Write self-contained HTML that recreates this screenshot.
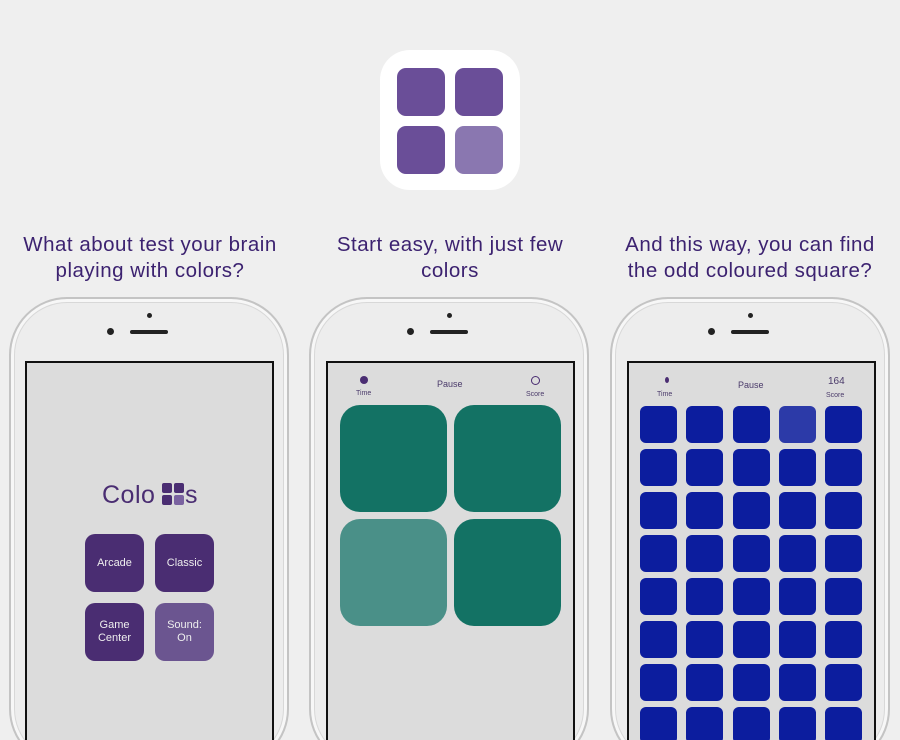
<!DOCTYPE html>
<html style="width:900px;height:740px;overflow:hidden"><head><meta charset="utf-8"><style>
*{margin:0;padding:0;box-sizing:border-box}
body{width:900px;height:740px;background:#efefef;position:relative;overflow:hidden;font-family:"Liberation Sans",sans-serif}
.abs{position:absolute}
.icon{left:380px;top:50px;width:140px;height:140px;background:#fff;border-radius:30px}
.ic{position:absolute;width:48px;height:48px;border-radius:9px;background:#6a4e98}
.cap{position:absolute;top:232px;width:300px;text-align:center;color:#3c2270;font-size:20.5px;line-height:26px;letter-spacing:.5px}
.phone{position:absolute;top:297px;width:280px;height:470px;background:#ededed;border:2px solid #c4c4c4;border-radius:58px;box-shadow:inset 0 0 0 3px #f7f7f7,inset 0 0 0 4px #d8d8d8}
.screen{position:absolute;top:361px;width:249px;height:390px;background:#dcdcdc;border:2px solid #111}
.cam{position:absolute;width:7px;height:7px;border-radius:50%;background:#222}
.spk{position:absolute;width:38px;height:4px;border-radius:2px;background:#222}
.dot{position:absolute;width:5px;height:5px;border-radius:50%;background:#222}
.btn{position:absolute;width:59px;height:58px;border-radius:10px;background:#4a2d72;color:#eee;font-size:11px;display:flex;align-items:center;justify-content:center;text-align:center;line-height:13px}
.g{position:absolute;width:107px;height:107px;border-radius:20px;background:#137264}
.lbl{position:absolute;color:#4a3a6a;font-size:7px}
.grid{position:absolute;left:640px;top:406px;display:grid;grid-template-columns:repeat(5,37px);column-gap:9.3px;row-gap:6px}
.grid div{width:37px;height:37px;border-radius:6px;background:#0c1d9e}
</style></head><body>
<div class="abs icon">
<div class="ic" style="left:17px;top:18px"></div><div class="ic" style="left:75px;top:18px"></div>
<div class="ic" style="left:17px;top:76px"></div><div class="ic" style="left:75px;top:76px;background:#8a77b0"></div>
</div>
<div class="cap" style="left:0">What about test your brain<br>playing with colors?</div>
<div class="cap" style="left:300px">Start easy, with just few<br>colors</div>
<div class="cap" style="left:600px">And this way, you can find<br>the odd coloured square?</div>

<div class="phone" style="left:9px"></div>
<div class="phone" style="left:309px"></div>
<div class="phone" style="left:610px"></div>

<div class="dot" style="left:147px;top:313px"></div><div class="cam" style="left:107px;top:328px"></div><div class="spk" style="left:130px;top:330px"></div>
<div class="dot" style="left:447px;top:313px"></div><div class="cam" style="left:407px;top:328px"></div><div class="spk" style="left:430px;top:330px"></div>
<div class="dot" style="left:748px;top:313px"></div><div class="cam" style="left:708px;top:328px"></div><div class="spk" style="left:731px;top:330px"></div>

<div class="screen" style="left:25px"></div>
<div class="screen" style="left:326px"></div>
<div class="screen" style="left:627px"></div>

<div class="abs" style="left:102px;top:481px;font-size:25px;color:#4a2d72;letter-spacing:0.5px">Colo</div>
<div class="abs" style="left:162px;top:483px;width:22px;height:22px">
<div class="abs" style="left:0;top:0;width:10px;height:10px;background:#4a2d72;border-radius:2px"></div>
<div class="abs" style="left:12px;top:0;width:10px;height:10px;background:#4a2d72;border-radius:2px"></div>
<div class="abs" style="left:0;top:12px;width:10px;height:10px;background:#4a2d72;border-radius:2px"></div>
<div class="abs" style="left:12px;top:12px;width:10px;height:10px;background:#7a62a0;border-radius:2px"></div>
</div>
<div class="abs" style="left:185px;top:481px;font-size:25px;color:#4a2d72">s</div>
<div class="btn" style="left:85px;top:534px">Arcade</div>
<div class="btn" style="left:155px;top:534px">Classic</div>
<div class="btn" style="left:85px;top:603px">Game<br>Center</div>
<div class="btn" style="left:155px;top:603px;background:#6b5590">Sound:<br>On</div>

<div class="abs" style="left:360px;top:376px;width:8px;height:8px;border-radius:50%;background:#4a2d72"></div>
<div class="lbl" style="left:356px;top:390px">Time</div>
<div class="abs" style="left:437px;top:379px;font-size:9px;color:#4a3a6a">Pause</div>
<div class="abs" style="left:531px;top:376px;width:9px;height:9px;border-radius:50%;border:1.3px solid #4a2d72"></div>
<div class="lbl" style="left:526px;top:391px">Score</div>
<div class="g" style="left:340px;top:405px"></div>
<div class="g" style="left:454px;top:405px"></div>
<div class="g" style="left:340px;top:519px;background:#4a9088"></div>
<div class="g" style="left:454px;top:519px"></div>

<div class="abs" style="left:665px;top:377px;width:4px;height:6px;border-radius:50%;background:#4a2d72"></div>
<div class="lbl" style="left:657px;top:391px">Time</div>
<div class="abs" style="left:738px;top:380px;font-size:9px;color:#4a3a6a">Pause</div>
<div class="abs" style="left:828px;top:376px;font-size:10px;color:#4a3a6a">164</div>
<div class="lbl" style="left:826px;top:392px">Score</div>
<div class="grid">
<div></div><div></div><div></div><div style="background:#2c3aa8"></div><div></div>
<div></div><div></div><div></div><div></div><div></div>
<div></div><div></div><div></div><div></div><div></div>
<div></div><div></div><div></div><div></div><div></div>
<div></div><div></div><div></div><div></div><div></div>
<div></div><div></div><div></div><div></div><div></div>
<div></div><div></div><div></div><div></div><div></div>
<div></div><div></div><div></div><div></div><div></div>
</div>
</body></html>
